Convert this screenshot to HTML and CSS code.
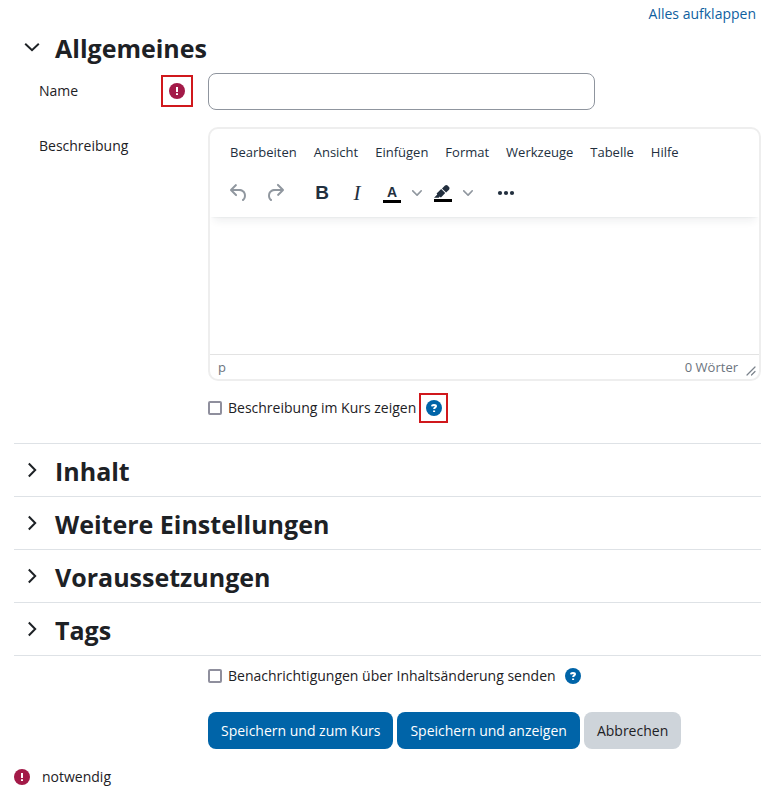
FILE: index.html
```html
<!DOCTYPE html>
<html lang="de">
<head>
<meta charset="UTF-8">
<meta name="viewport" content="width=device-width, initial-scale=1.0">
<title>Allgemeines</title>
<link rel="stylesheet" href="styles.css">
</head>
<body>
<form class="mform">
  <div class="collapse-all"><a href="#">Alles aufklappen</a></div>

  <details class="section" open>
    <summary>
      <svg class="chevron" viewBox="0 0 16 16"><path d="M1.2 4.8 8 11.2l6.8-6.4"/></svg>
      <h3>Allgemeines</h3>
    </summary>
    <div class="fields">
      <div class="row">
        <div class="row-label">
          <label for="name">Name</label>
          <span class="marked marked-required">
            <svg class="icon icon-required" viewBox="0 0 16 16"><circle cx="8" cy="8" r="8"/><path d="M8 4v5M8 10.3v1.8"/></svg>
          </span>
        </div>
        <input class="text-input" type="text" id="name">
      </div>

      <div class="row">
        <div class="row-label"><label for="description">Beschreibung</label></div>
        <div class="editor">
          <div class="editor-header">
            <div class="menubar">
              <button type="button">Bearbeiten</button>
              <button type="button">Ansicht</button>
              <button type="button">Einfügen</button>
              <button type="button">Format</button>
              <button type="button">Werkzeuge</button>
              <button type="button">Tabelle</button>
              <button type="button">Hilfe</button>
            </div>
            <div class="toolbar">
              <div class="tools tools-history">
                <button type="button" class="tool disabled" aria-label="Rückgängig">
                  <svg width="24" height="24" viewBox="0 0 24 24"><path d="M6.4 8H12c3.7 0 6.2 2 6.8 5.1.6 2.7-.4 5.6-2.3 6.8a1 1 0 0 1-1-1.8c1.1-.6 1.8-2.7 1.4-4.6-.5-2.1-2.1-3.5-4.9-3.5H6.4l3.3 3.3a1 1 0 1 1-1.4 1.4l-5-5a1 1 0 0 1 0-1.4l5-5a1 1 0 0 1 1.4 1.4L6.4 8Z"/></svg>
                </button>
                <button type="button" class="tool disabled" aria-label="Wiederholen">
                  <svg width="24" height="24" viewBox="0 0 24 24"><path d="M17.6 10H12c-2.8 0-4.4 1.4-4.9 3.5-.4 2 .3 4 1.4 4.6a1 1 0 1 1-1 1.8c-2-1.2-2.9-4.1-2.3-6.8.6-3 3-5.1 6.8-5.1h5.6l-3.3-3.3a1 1 0 1 1 1.4-1.4l5 5a1 1 0 0 1 0 1.4l-5 5a1 1 0 0 1-1.4-1.4l3.3-3.3Z"/></svg>
                </button>
              </div>
              <div class="tools">
                <button type="button" class="tool bold" aria-label="Fett">B</button>
                <button type="button" class="tool italic" aria-label="Kursiv">I</button>
                <button type="button" class="tool color" aria-label="Textfarbe"><span>A</span></button>
                <button type="button" class="tool-arrow" aria-label="Textfarbe wählen">
                  <svg width="10" height="10" viewBox="0 0 10 10"><path d="M8.7 2.2c.3-.3.8-.3 1 0 .4.4.4.9 0 1.2L5.7 7.8c-.3.3-.9.3-1.2 0L.2 3.4a.8.8 0 0 1 0-1.2c.3-.3.8-.3 1.1 0L5 6l3.7-3.8Z"/></svg>
                </button>
                <button type="button" class="tool" aria-label="Hintergrundfarbe">
                  <svg width="24" height="24" viewBox="0 0 24 24"><path fill="#000" d="M3 18h18v3H3z"/><path d="M7.7 16.7H3l3.3-3.3-.7-.8L10.2 8l4 4.1-4 4.2c-.2.2-.6.2-.8 0l-.6-.7-1.1 1.1zm5-7.5L11 7.4l3-2.9a2 2 0 0 1 2.6 0L18 6c.7.7.7 2 0 2.7l-2.9 2.9-1.8-1.8-.5-.6"/></svg>
                </button>
                <button type="button" class="tool-arrow" aria-label="Hintergrundfarbe wählen">
                  <svg width="10" height="10" viewBox="0 0 10 10"><path d="M8.7 2.2c.3-.3.8-.3 1 0 .4.4.4.9 0 1.2L5.7 7.8c-.3.3-.9.3-1.2 0L.2 3.4a.8.8 0 0 1 0-1.2c.3-.3.8-.3 1.1 0L5 6l3.7-3.8Z"/></svg>
                </button>
              </div>
              <div class="tools">
                <button type="button" class="tool" aria-label="Mehr">
                  <svg width="24" height="24" viewBox="0 0 24 24"><circle cx="6" cy="12" r="2.1"/><circle cx="12" cy="12" r="2.1"/><circle cx="18" cy="12" r="2.1"/></svg>
                </button>
              </div>
            </div>
          </div>
          <textarea id="description"></textarea>
          <div class="statusbar">
            <span>p</span>
            <span class="wordcount">0 Wörter</span>
            <svg class="resize" width="10" height="10" viewBox="0 0 10 10"><path d="M1 9 9 1M5.5 9 9 5.5"/></svg>
          </div>
        </div>
      </div>

      <div class="row">
        <div class="check">
          <input type="checkbox" id="showdesc">
          <label for="showdesc">Beschreibung im Kurs zeigen</label>
          <button type="button" class="help marked marked-help" aria-label="Hilfe">
            <svg class="icon icon-help" viewBox="0 0 16 16"><circle cx="8" cy="8" r="8"/><path d="M6 6.4C6.1 5.3 7 4.9 8 4.9c1.2 0 2 .5 2 1.4 0 1.2-1.9 1.1-1.9 2.8M8.1 10.4v1.7"/></svg>
          </button>
        </div>
      </div>
    </div>
  </details>

  <details class="section">
    <summary>
      <svg class="chevron" viewBox="0 0 16 16"><path d="M4.8 1.5 11.2 8l-6.4 6.5"/></svg>
      <h3>Inhalt</h3>
    </summary>
  </details>
  <details class="section">
    <summary>
      <svg class="chevron" viewBox="0 0 16 16"><path d="M4.8 1.5 11.2 8l-6.4 6.5"/></svg>
      <h3>Weitere Einstellungen</h3>
    </summary>
  </details>
  <details class="section">
    <summary>
      <svg class="chevron" viewBox="0 0 16 16"><path d="M4.8 1.5 11.2 8l-6.4 6.5"/></svg>
      <h3>Voraussetzungen</h3>
    </summary>
  </details>
  <details class="section">
    <summary>
      <svg class="chevron" viewBox="0 0 16 16"><path d="M4.8 1.5 11.2 8l-6.4 6.5"/></svg>
      <h3>Tags</h3>
    </summary>
  </details>

  <div class="footer">
    <div class="check">
      <input type="checkbox" id="notify">
      <label for="notify">Benachrichtigungen über Inhaltsänderung senden</label>
      <button type="button" class="help help-spaced" aria-label="Hilfe">
        <svg class="icon icon-help" viewBox="0 0 16 16"><circle cx="8" cy="8" r="8"/><path d="M6 6.4C6.1 5.3 7 4.9 8 4.9c1.2 0 2 .5 2 1.4 0 1.2-1.9 1.1-1.9 2.8M8.1 10.4v1.7"/></svg>
      </button>
    </div>
    <div class="actions">
      <button type="submit" class="btn btn-primary">Speichern und zum Kurs</button>
      <button type="submit" class="btn btn-primary">Speichern und anzeigen</button>
      <button type="button" class="btn btn-secondary">Abbrechen</button>
    </div>
  </div>

  <div class="required-note">
    <svg class="icon icon-required" viewBox="0 0 16 16"><circle cx="8" cy="8" r="8"/><path d="M8 4v5M8 10.3v1.8"/></svg>
    <span>notwendig</span>
  </div>
</form>
</body>
</html>
```
FILE: styles.css
```css
* {
    box-sizing: border-box;
}

body {
    margin: 0;
    font-family: "Open Sans", "Noto Sans", sans-serif;
    font-size: 14px;
    line-height: 22px;
    color: #1d2125;
    background-color: #fff;
}

button,
input,
textarea {
    font: inherit;
    color: inherit;
}

button {
    padding: 0;
    border: none;
    background: none;
    cursor: pointer;
}

.mform {
    padding: 3px 15px 8px 14px;
}

.collapse-all {
    text-align: right;
    padding-right: 5px;
}

.collapse-all a {
    color: #0f5f9f;
    text-decoration: none;
}

/* Collapsible sections */
.section {
    border-bottom: 1px solid #dee2e6;
}

.section summary {
    display: flex;
    align-items: center;
    gap: 15px;
    height: 52px;
    padding: 2px 0 0 10px;
    list-style: none;
    cursor: pointer;
}

.section[open] summary {
    height: 48px;
    padding: 0 0 2px 10px;
}

.section h3 {
    margin: 0;
    font-size: 25px;
    line-height: 32px;
    font-weight: bold;
}

.chevron {
    width: 16px;
    height: 16px;
    margin-bottom: 2px;
    fill: none;
    stroke: #1d2125;
    stroke-width: 2;
}

.fields {
    display: flex;
    flex-direction: column;
    gap: 17px;
    padding: 0 0 20px 25px;
}

.row {
    display: grid;
    grid-template-columns: 154px minmax(0, 1fr);
    column-gap: 15px;
}

.row .check {
    grid-column: 2;
    margin-top: -5px;
}

.row-label {
    display: flex;
    justify-content: space-between;
    align-items: flex-start;
    padding-top: 8px;
}

.row:first-child .row-label {
    align-items: center;
    padding: 0 0 2px;
}

.text-input {
    width: 70%;
    height: 37px;
    padding: 6px 12px;
    border: 1px solid #8f959e;
    border-radius: 8px;
}

/* Editor */
.editor {
    border: 2px solid #eee;
    border-radius: 10px;
    overflow: hidden;
}

.editor-header {
    position: relative;
    padding: 8px 12px 4px;
    box-shadow: 0 2px 2px -2px rgba(34, 47, 62, .1), 0 8px 8px -4px rgba(34, 47, 62, .07);
}

.menubar {
    display: flex;
    gap: 1px;
    margin-bottom: 5px;
}

.menubar button {
    height: 30px;
    padding: 0 8px;
    font-size: 13px;
    color: #222f3e;
}

.toolbar {
    display: flex;
    gap: 13px;
    height: 41px;
    align-items: center;
}

.tools {
    display: flex;
    gap: 1px;
}

.tool,
.tool-arrow {
    display: flex;
    align-items: center;
    justify-content: center;
    height: 28px;
    color: #222f3e;
}

.tool {
    width: 34px;
}

.tools-history {
    gap: 2px;
}

.tool-arrow {
    width: 16px;
    margin-left: -1px;
}

.tool svg {
    fill: #222f3e;
}

.tool.disabled svg,
.tool-arrow svg {
    fill: #90979f;
}

.tool.bold {
    font-family: "Liberation Sans", sans-serif;
    font-size: 19px;
    font-weight: bold;
}

.tool.italic {
    font-family: "Liberation Serif", serif;
    font-size: 21px;
    font-style: italic;
}

.tool.color span {
    width: 18px;
    padding-top: 3px;
    border-bottom: 3px solid #000;
    font-family: "Liberation Sans", sans-serif;
    font-size: 14px;
    line-height: 15px;
    font-weight: bold;
}

.editor textarea {
    display: block;
    width: 100%;
    height: 137px;
    padding: 12px;
    border: none;
    outline: none;
    resize: none;
}

.statusbar {
    display: flex;
    align-items: center;
    height: 25px;
    padding: 0 3px 0 8px;
    border-top: 1px solid #e3e3e3;
    font-size: 13px;
    color: #6b747e;
}

.wordcount {
    margin-left: auto;
}

.resize {
    align-self: flex-end;
    margin: 0 0 3px 8px;
    fill: none;
    stroke: #7a828b;
    stroke-width: 1.2;
    stroke-linecap: round;
}

/* Checkbox rows */
.check {
    display: flex;
    align-items: center;
    min-height: 30px;
}

.check input {
    appearance: none;
    width: 14px;
    height: 14px;
    margin: 0 6px 0 0;
    border: 2px solid #8f8f9d;
    border-radius: 2px;
    background-color: #fff;
}

.check input:checked {
    background-color: #0f6cbf;
}

.icon {
    display: block;
    width: 16px;
    height: 16px;
}

.icon path {
    fill: none;
    stroke: #fff;
    stroke-width: 2;
}

.icon-required circle {
    fill: #a31a48;
}

.icon-help circle {
    fill: #0064a8;
}

.help-spaced {
    margin-left: 9px;
}

.marked {
    display: flex;
    align-items: center;
    justify-content: center;
    border: 2px solid #d0181c;
}

.marked-required {
    width: 32px;
    height: 32px;
}

.marked-help {
    width: 29px;
    height: 30px;
    margin-left: 3px;
}

/* Buttons below the sections */
.footer {
    padding: 5px 0 0 194px;
}

.actions {
    display: flex;
    flex-wrap: wrap;
    gap: 4px;
    margin-top: 21px;
}

.btn {
    height: 37px;
    padding: 0 13px;
    border-radius: 8px;
}

.btn-primary {
    background-color: #0064a8;
    color: #fff;
}

.btn-secondary {
    background-color: #ced4da;
}

.required-note {
    display: flex;
    align-items: center;
    gap: 12px;
    margin-top: 17px;
}
```
